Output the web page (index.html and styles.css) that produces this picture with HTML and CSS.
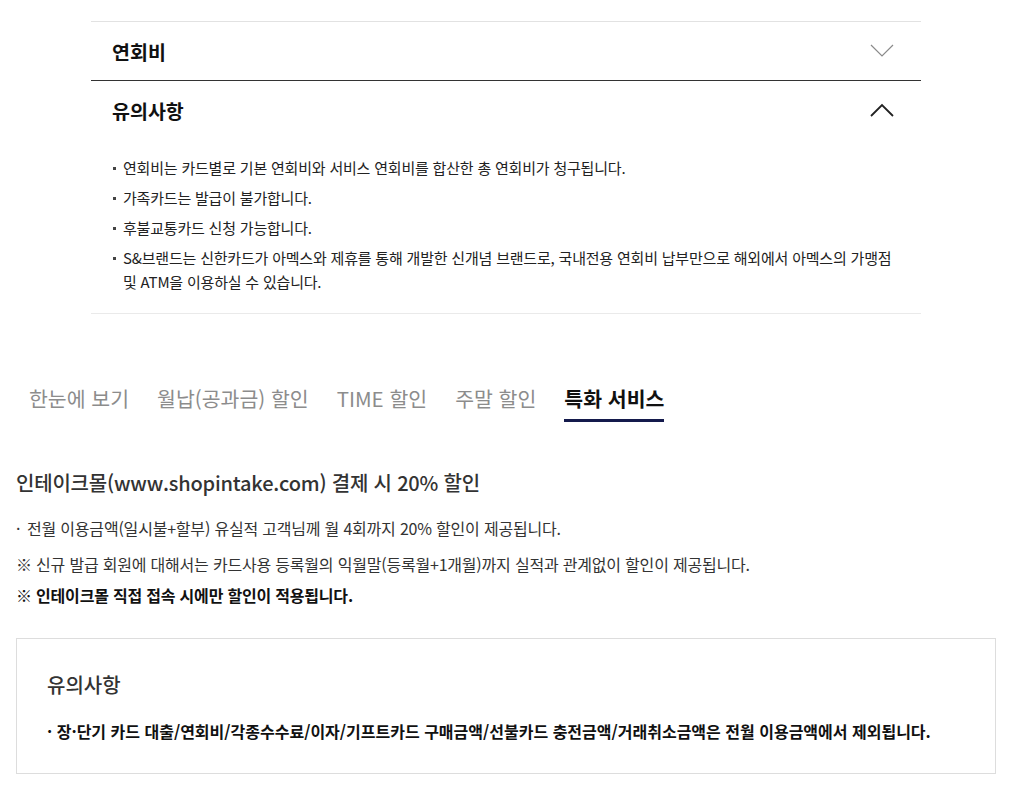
FILE: index.html
```html
<!DOCTYPE html>
<html lang="ko">
<head>
    <meta charset="UTF-8">
    <meta name="viewport" content="width=device-width, initial-scale=1.0">
    <title>특화 서비스</title>
    <link rel="stylesheet" href="styles.css">
</head>
<body>
    <div class="accordion">
        <div class="acc-item">
            <div class="acc-head">
                <span class="acc-title">연회비</span>
                <svg class="chev down" width="24" height="14" viewBox="0 0 24 14"><path d="M1 1 L12 12 L23 1" fill="none" stroke="#8a8a8a" stroke-width="1.2"/></svg>
            </div>
        </div>
        <div class="acc-item open">
            <div class="acc-head">
                <span class="acc-title">유의사항</span>
                <svg class="chev up" width="24" height="14" viewBox="0 0 24 14"><path d="M1 13 L12 2 L23 13" fill="none" stroke="#222" stroke-width="1.8"/></svg>
            </div>
            <ul class="acc-body">
                <li>연회비는 카드별로 기본 연회비와 서비스 연회비를 합산한 총 연회비가 청구됩니다.</li>
                <li>가족카드는 발급이 불가합니다.</li>
                <li>후불교통카드 신청 가능합니다.</li>
                <li>S&amp;브랜드는 신한카드가 아멕스와 제휴를 통해 개발한 신개념 브랜드로, 국내전용 연회비 납부만으로 해외에서 아멕스의 가맹점<br>및 ATM을 이용하실 수 있습니다.</li>
            </ul>
        </div>
    </div>

    <div class="tabs">
        <a class="tab">한눈에 보기</a>
        <a class="tab">월납(공과금) 할인</a>
        <a class="tab">TIME 할인</a>
        <a class="tab">주말 할인</a>
        <a class="tab active">특화 서비스</a>
    </div>

    <div class="service">
        <h3 class="service-title">인테이크몰(www.shopintake.com) 결제 시 20% 할인</h3>
        <p class="line dot">전월 이용금액(일시불+할부) 유실적 고객님께 월 4회까지 20% 할인이 제공됩니다.</p>
        <p class="line">※ 신규 발급 회원에 대해서는 카드사용 등록월의 익월말(등록월+1개월)까지 실적과 관계없이 할인이 제공됩니다.</p>
        <p class="line strong">※ 인테이크몰 직접 접속 시에만 할인이 적용됩니다.</p>

        <div class="notice">
            <h4 class="notice-title">유의사항</h4>
            <p class="notice-text">· 장·단기 카드 대출/연회비/각종수수료/이자/기프트카드 구매금액/선불카드 충전금액/거래취소금액은 전월 이용금액에서 제외됩니다.</p>
        </div>
    </div>
</body>
</html>
```

FILE: styles.css
```css
body {
    margin: 0;
    font-family: "Noto Sans CJK KR", "Noto Sans", sans-serif;
    color: #222;
    background-color: #fff;
}

.accordion {
    width: 830px;
    margin-left: 91px;
    padding-top: 21px;
}

.acc-item {
    border-top: 1px solid #e2e2e2;
}

.acc-item.open {
    border-top: 1px solid #333;
    border-bottom: 1px solid #eaeaea;
}

.acc-head {
    height: 58px;
    display: flex;
    align-items: center;
    justify-content: space-between;
    padding: 0 27px 0 21px;
}

.acc-title {
    font-size: 19.5px;
    font-weight: 700;
    color: #111;
}

.acc-body {
    list-style: none;
    margin: 0;
    padding: 17px 0 19px 22px;
}

.acc-body li {
    position: relative;
    padding-left: 10px;
    font-size: 15px;
    line-height: 24px;
    margin-bottom: 6px;
    color: #222;
    letter-spacing: -0.2px;
}

.acc-body li:last-child {
    margin-bottom: 0;
}

.acc-body li::before {
    content: "";
    position: absolute;
    left: 0;
    top: 11px;
    width: 3px;
    height: 3px;
    background-color: #444;
}

.tabs {
    display: flex;
    gap: 28px;
    margin: 69px 0 0 29px;
}

.tab {
    font-size: 20.5px;
    line-height: 30px;
    color: #8c8c8c;
    padding-bottom: 6px;
    border-bottom: 3px solid transparent;
}

.tab.active {
    color: #111;
    font-weight: 700;
    border-bottom-color: #141a4c;
}

.service {
    padding: 0 15px 0 16px;
}

.service-title {
    margin: 46px 0 18px;
    font-size: 20px;
    font-weight: 500;
    line-height: 30px;
    color: #333;
    letter-spacing: -0.2px;
}

.line {
    margin: 0 0 7px;
    font-size: 16px;
    line-height: 24px;
    color: #333;
    letter-spacing: -0.2px;
}

.line.dot {
    margin-bottom: 12px;
}

.line.dot::before {
    content: "·";
    display: inline-block;
    width: 11px;
}

.line.strong {
    font-weight: 700;
    color: #111;
}

.notice {
    margin-top: 31px;
    border: 1px solid #ddd;
    padding: 32px 30px 30px 30px;
}

.notice-title {
    margin: 0 0 20px;
    font-size: 20px;
    font-weight: 500;
    line-height: 28px;
    color: #333;
}

.notice-text {
    margin: 0;
    font-size: 16px;
    line-height: 24px;
    font-weight: 700;
    color: #111;
}
```
